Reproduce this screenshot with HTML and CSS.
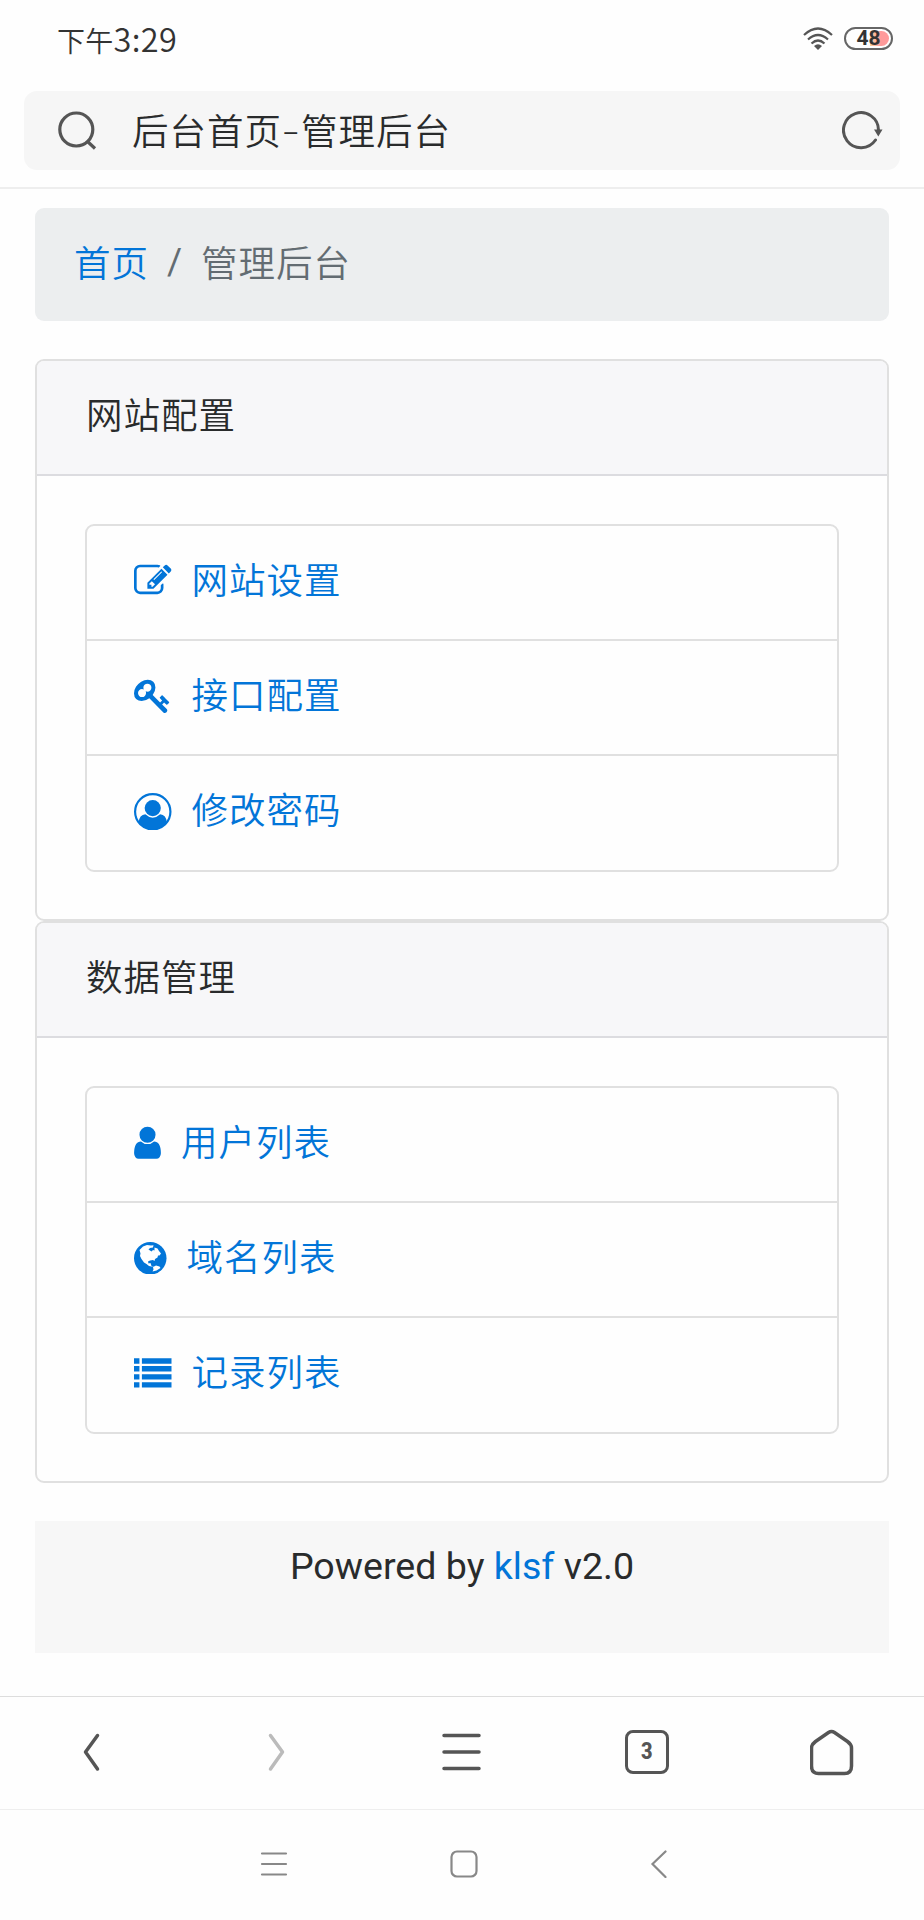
FILE: index.html
```html
<!DOCTYPE html>
<html lang="zh-CN">
<head>
    <meta charset="utf-8">
    <title>后台首页-管理后台</title>
    <link rel="stylesheet" href="styles.css">
</head>
<body>
    <div class="status-bar">
        <span class="time">下午<span class="digits">3:29</span></span>
        <div class="status-icons">
            <svg class="wifi" width="30" height="24" viewBox="0 0 30 24" fill="none" stroke="#555" stroke-width="2.2">
                <path d="M1 8Q15-5 29 8"/>
                <path d="M5 12.500Q15 3.500 25 12.500"/>
                <path d="M8.500 16.500Q15 10.500 21.500 16.500"/>
                <path d="M11 19Q15 15.500 19 19L15 23Z" fill="#555" stroke="none"/>
            </svg>
            <span class="battery">48</span>
        </div>
    </div>

    <div class="address-bar">
        <div class="address">
            <svg width="40" height="40" viewBox="0 0 40 40" fill="none" stroke="#555" stroke-width="3.200">
                <circle cx="18.300" cy="18.500" r="16.500"/>
                <path d="M29 30L37 37.500"/>
            </svg>
            <span class="address-text">后台首页<span class="dash">-</span>管理后台</span>
            <svg width="42" height="40" viewBox="0 0 42 40" fill="none" stroke="#555" stroke-width="3">
                <path d="M33.500 29A17.500 17.500 0 1 1 36.500 19" stroke-linecap="round"/>
                <path d="M32 18.500H40.500L36.300 25.500Z" fill="#555" stroke="none"/>
            </svg>
        </div>
    </div>

    <div class="container">
        <div class="breadcrumb">
            <a href="#">首页</a>
            <span class="slash">/</span>
            <span class="active">管理后台</span>
        </div>

        <div class="card">
            <div class="card-header">网站配置</div>
            <div class="card-block">
                <div class="list-group">
                    <a href="#" class="list-item">
                        <svg width="37.500" height="37.500" viewBox="0 0 1792 1792"><path d="M888 1184l116-116-152-152-116 116v56h96v96h56zm440-720q-16-16-33 1l-350 350q-17 17-1 33t33-1l350-350q17-17 1-33zm80 594v190q0 119-84.500 203.500t-203.500 84.500h-832q-119 0-203.500-84.500t-84.500-203.500v-832q0-119 84.500-203.500t203.500-84.500h832q63 0 117 25 15 7 18 23 3 17-9 29l-49 49q-14 14-32 8-23-6-45-6h-832q-66 0-113 47t-47 113v832q0 66 47 113t113 47h832q66 0 113-47t47-113v-126q0-13 9-22l64-64q15-15 35-7t20 29zm-96-738l288 288-672 672h-288v-288zm444 132l-92 92-288-288 92-92q28-28 68-28t68 28l152 152q28 28 28 68t-28 68z"/></svg>
                        <span>网站设置</span>
                    </a>
                    <a href="#" class="list-item">
                        <svg width="37.500" height="37.500" viewBox="0 0 1792 1792"><path d="M832 512q0-80-56-136t-136-56-136 56-56 136q0 42 19 83-41-19-83-19-80 0-136 56t-56 136 56 136 136 56 136-56 56-136q0-42-19-83 41 19 83 19 80 0 136-56t56-136zm851 704q0 17-49 66t-66 49q-9 0-28.500-16t-36.500-33-38.500-40-24.500-26l-96 96 220 220q28 28 28 68 0 42-39 81t-81 39q-40 0-68-28l-671-671q-176 131-365 131-163 0-265.500-102.500t-102.500-265.500q0-160 95-313t248-248 313-95q163 0 265.500 102.500t102.500 265.500q0 189-131 365l355 355 96-96q-3-3-26-24.500t-40-38.500-33-36.500-16-28.500q0-17 49-66t66-49q13 0 23 10 6 6 46 44.500t82 79.500 86.500 86 73 78 28.500 41z"/></svg>
                        <span>接口配置</span>
                    </a>
                    <a href="#" class="list-item">
                        <svg width="37.500" height="37.500" viewBox="0 0 38 38">
                            <circle cx="19" cy="19" r="17.900" fill="none" stroke="currentColor" stroke-width="2.200"/>
                            <circle cx="19" cy="15.300" r="8.200"/>
                            <path d="M4.500 30Q5.500 22 11.500 21.500Q19 28.500 26.500 21.500Q32.500 22 33.500 30A18.300 18.300 0 0 1 4.500 30Z"/>
                        </svg>
                        <span>修改密码</span>
                    </a>
                </div>
            </div>
        </div>

        <div class="card">
            <div class="card-header">数据管理</div>
            <div class="card-block">
                <div class="list-group">
                    <a href="#" class="list-item">
                        <svg width="27" height="37.500" viewBox="256 0 1280 1792"><path d="M1536 1399q0 109-62.500 187t-150.500 78h-854q-88 0-150.500-78t-62.500-187q0-85 8.500-160.500t31.500-152 58.500-131 94-89 134.500-34.500q131 128 313 128t313-128q76 0 134.500 34.500t94 89 58.500 131 31.500 152 8.500 160.500zm-256-887q0 159-112.500 271.500t-271.500 112.500-271.500-112.500-112.500-271.500 112.500-271.500 271.500-112.500 271.500 112.500 112.500 271.500z"/></svg>
                        <span>用户列表</span>
                    </a>
                    <a href="#" class="list-item">
                        <svg width="32.500" height="32.500" viewBox="0 0 32.500 32.500">
                            <circle cx="16.250" cy="16.250" r="16.250"/>
                            <path fill="#fff" d="M5.500 8L9 4.500L13 3L17 3.500L19.500 3.200L19 5.500L16 6L14.500 7.500L17.500 9.500L19 8L20.500 8.500L20.500 5.500L23.500 6.500L25 9L27 11.500L25.500 13.500L24 13.500L23.500 15.500L21 17L20.500 19L19 18L16 18.500L14 19.500L14.500 21.500L16.500 21L17.500 24L20 25L15 24L12.500 22L10 20.500L7.500 17L6 14L6.500 11.500ZM19 25L22 23.500L25.500 24.500L26.500 26L22.500 28.500L18.500 29.500L19.500 27.500Z"/>
                        </svg>
                        <span>域名列表</span>
                    </a>
                    <a href="#" class="list-item">
                        <svg width="37.500" height="30" viewBox="0 0 38 30">
                            <path d="M0 0h5.500v5.500H0zM8 0h30v5.500H8zM0 8h5.500v5.500H0zM8 8h30v5.500H8zM0 16.200h5.500v5.500H0zM8 16.200h30v5.500H8zM0 24.300h5.500v5.500H0zM8 24.300h30v5.500H8z"/>
                        </svg>
                        <span>记录列表</span>
                    </a>
                </div>
            </div>
        </div>

        <div class="footer">Powered by <a href="#">klsf</a> v2.0</div>
    </div>

    <div class="toolbar">
        <svg width="44" height="48" viewBox="0 0 44 48"><path d="M27.500 7.500L15.500 24L27.500 41"/></svg>
        <svg class="disabled" width="44" height="48" viewBox="0 0 44 48"><path d="M15.500 7.500L27.500 24L15.500 41"/></svg>
        <svg width="44" height="48" viewBox="0 0 44 48"><path d="M4 7.500H39M4 24H39M4 40.500H39"/></svg>
        <span class="tabs">3</span>
        <svg width="44" height="48" viewBox="0 0 44 48"><path d="M18.500 4.500Q21.500 2.500 24.500 4.500L37.500 13.500Q41.500 16.500 41.500 20V38Q41.500 45.500 34.500 45.500H8.500Q1.500 45.500 1.500 38V20Q1.500 16.500 5.500 13.500Z"/></svg>
    </div>

    <div class="nav-keys">
        <svg width="28" height="28" viewBox="0 0 28 28"><path d="M2 3.500H26M2 14H26M2 24.500H26"/></svg>
        <svg width="28" height="28" viewBox="0 0 28 28"><rect x="1.500" y="1.500" width="25" height="25" rx="5.500"/></svg>
        <svg width="28" height="28" viewBox="0 0 28 28"><path d="M25.500 1.500L12.500 14L25.500 27"/></svg>
    </div>
</body>
</html>
```
FILE: styles.css
```css
* {
    box-sizing: border-box;
}

body {
    margin: 0;
    height: 1920px;
    display: flex;
    flex-direction: column;
    background-color: #fefefe;
    color: #292b2c;
    font-family: Roboto, "Noto Sans CJK SC", sans-serif;
    font-size: 36.5px;
    font-weight: 350;
    letter-spacing: 1px;
}

a {
    color: #0275d8;
    text-decoration: none;
}

svg {
    display: block;
    flex: none;
}

.status-bar {
    height: 91px;
    padding: 0 31px 14px 57px;
    display: flex;
    align-items: center;
    justify-content: space-between;
}

.time {
    font-family: "Noto Sans CJK SC", sans-serif;
    font-size: 28px;
    line-height: 40px;
    letter-spacing: 0.3px;
    color: #333;
}

.digits {
    font-size: 32.5px;
}

.status-icons {
    display: flex;
    align-items: center;
    gap: 11px;
}

.battery {
    width: 49px;
    height: 23px;
    border: 2px solid #666;
    border-radius: 12px;
    padding: 2px;
    background: linear-gradient(to right, transparent 54%, #fbd09d 54%, #ff9a9a 80%) content-box;
    font-family: Roboto, sans-serif;
    font-size: 21px;
    line-height: 15px;
    letter-spacing: 0;
    text-align: center;
    font-weight: bold;
    color: #333;
}

.address-bar {
    height: 98px;
    padding: 0 24px;
    border-bottom: 2px solid #eee;
}

.address {
    height: 79px;
    padding: 0 16px 0 34px;
    display: flex;
    align-items: center;
    border-radius: 13px;
    background-color: #f6f6f6;
}

.address-text {
    flex: 1;
    margin: 0 0 2px 34px;
}

.dash {
    display: inline-block;
    width: 19px;
    text-align: center;
    transform: scaleX(1.5);
}

.container {
    padding: 19px 35px 0;
    height: 1507px;
}

.breadcrumb {
    height: 113px;
    padding: 0 39px 6px;
    margin-bottom: 38px;
    display: flex;
    align-items: center;
    border-radius: 9px;
    background-color: #eceeef;
}

.slash {
    margin: 0 18px;
    font-weight: 400;
}

.slash, .active {
    color: #636c72;
}

.card {
    border: 2px solid #e0e0e0;
    border-radius: 9px;
}

.card-header {
    height: 115px;
    padding-left: 49px;
    line-height: 112px;
    border-bottom: 2px solid #dcdce0;
    border-radius: 7px 7px 0 0;
    background-color: #f7f7f9;
}

.card-block {
    padding: 47.5px 48px;
}

.list-group {
    height: 348px;
    display: flex;
    flex-direction: column;
    border: 2px solid #e0e0e0;
    border-radius: 9px;
}

.list-item {
    flex: 1;
    display: flex;
    align-items: center;
    gap: 20px;
    padding: 0 0 3px 47px;
    border-top: 2px solid #e0e0e0;
}

.list-item:first-child {
    border-top: none;
}

.list-item svg {
    fill: currentColor;
}

.list-item span {
    margin-bottom: 5px;
}

.footer {
    height: 132px;
    margin-top: 38px;
    padding-top: 17px;
    line-height: 56px;
    text-align: center;
    font-size: 37.6px;
    letter-spacing: 0;
    font-weight: 400;
    background-color: #f7f7f7;
}

.toolbar {
    height: 113px;
    border-top: 1px solid #ddd;
    padding-bottom: 2px;
    display: grid;
    grid-template-columns: repeat(5, 1fr);
    align-items: center;
    justify-items: center;
}

.toolbar svg {
    fill: none;
    stroke: #555;
    stroke-width: 3.5;
    stroke-linecap: round;
    stroke-linejoin: round;
}

.toolbar .disabled {
    stroke: #bbb;
}

.tabs {
    width: 44px;
    height: 44px;
    border: 3px solid #555;
    border-radius: 8px;
    text-align: center;
    font-family: "Roboto Condensed", Roboto, sans-serif;
    font-size: 24px;
    font-weight: bold;
    line-height: 37px;
    letter-spacing: 0;
    color: #555;
}

.nav-keys {
    height: 111px;
    border-top: 1px solid #eee;
    padding: 0 256px 2px 260px;
    display: flex;
    align-items: center;
    justify-content: space-between;
}

.nav-keys svg {
    fill: none;
    stroke: #888;
    stroke-width: 2.2;
    stroke-linecap: round;
}
```
